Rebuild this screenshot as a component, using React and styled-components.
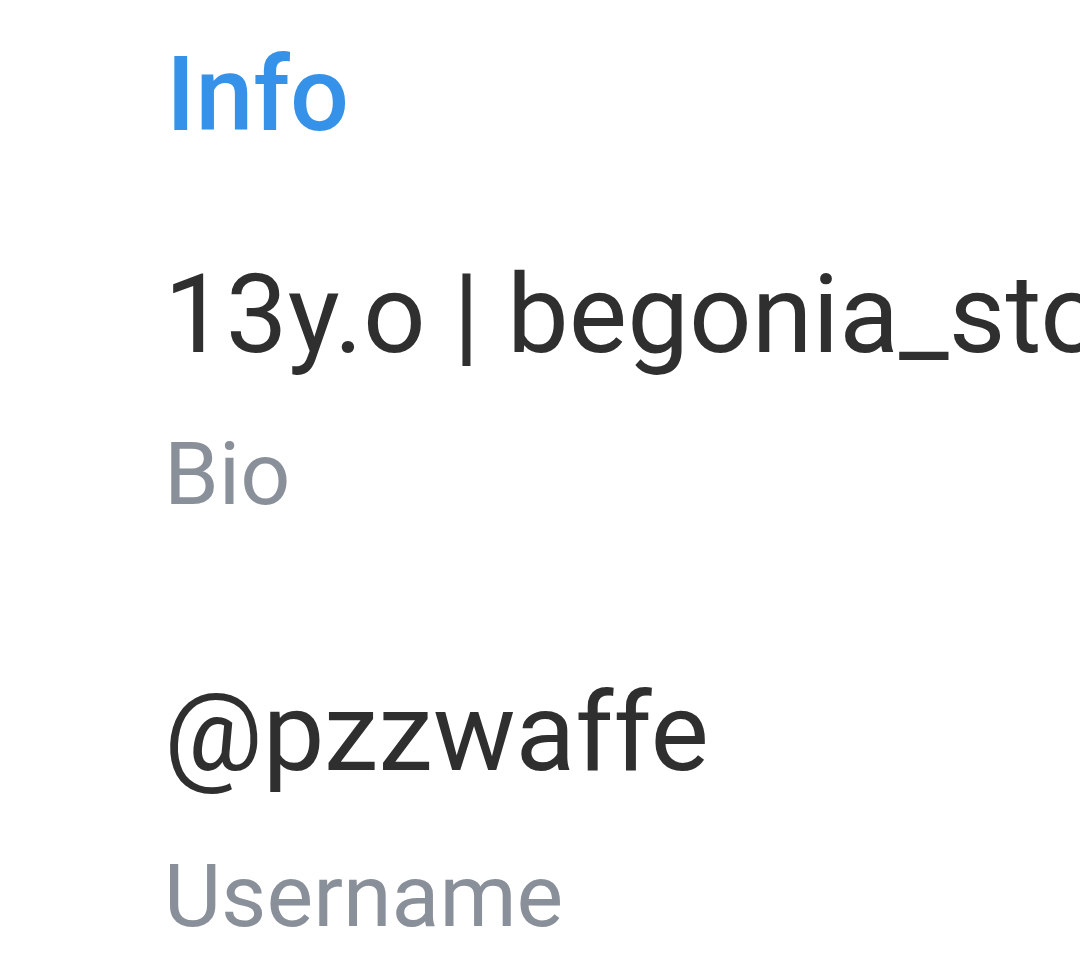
import React from "react";
import styled, { createGlobalStyle } from "styled-components";

const GlobalStyle = createGlobalStyle`
  html, body {
    margin: 0;
    padding: 0;
    background: #ffffff;
  }
  body {
    font-family: Roboto, "Noto Sans", "Liberation Sans", sans-serif;
    overflow: hidden;
  }
`;

const Section = styled.section`
  display: flex;
  flex-direction: column;
  padding: 33px 0 0 164px;
  width: 100%;
  box-sizing: border-box;
  overflow: hidden;
`;

const Header = styled.h2`
  margin: 0 0 91px 2px;
  font-size: 104px;
  line-height: 1.2;
  font-weight: 500;
  color: #3592e8;
`;

const Item = styled.div`
  display: flex;
  flex-direction: column;
  gap: ${({ gap }) => gap}px;
  margin-bottom: ${({ after }) => after || 0}px;
`;

const Value = styled.div`
  font-size: 110px;
  line-height: 1.2;
  font-weight: 400;
  color: #2f2f2f;
  white-space: nowrap;
`;

const Label = styled.div`
  font-size: 88px;
  line-height: 1.2;
  font-weight: 400;
  color: #8a9099;
  white-space: nowrap;
`;

const rows = [
  { value: "13y.o | begonia_story", label: "Bio", gap: 40, after: 141 },
  { value: "@pzzwaffe", label: "Username", gap: 44, after: 0 },
];

export default function App() {
  return (
    <>
      <GlobalStyle />
      <Section>
        <Header>Info</Header>
        {rows.map((r) => (
          <Item key={r.label} gap={r.gap} after={r.after}>
            <Value>{r.value}</Value>
            <Label>{r.label}</Label>
          </Item>
        ))}
      </Section>
    </>
  );
}
